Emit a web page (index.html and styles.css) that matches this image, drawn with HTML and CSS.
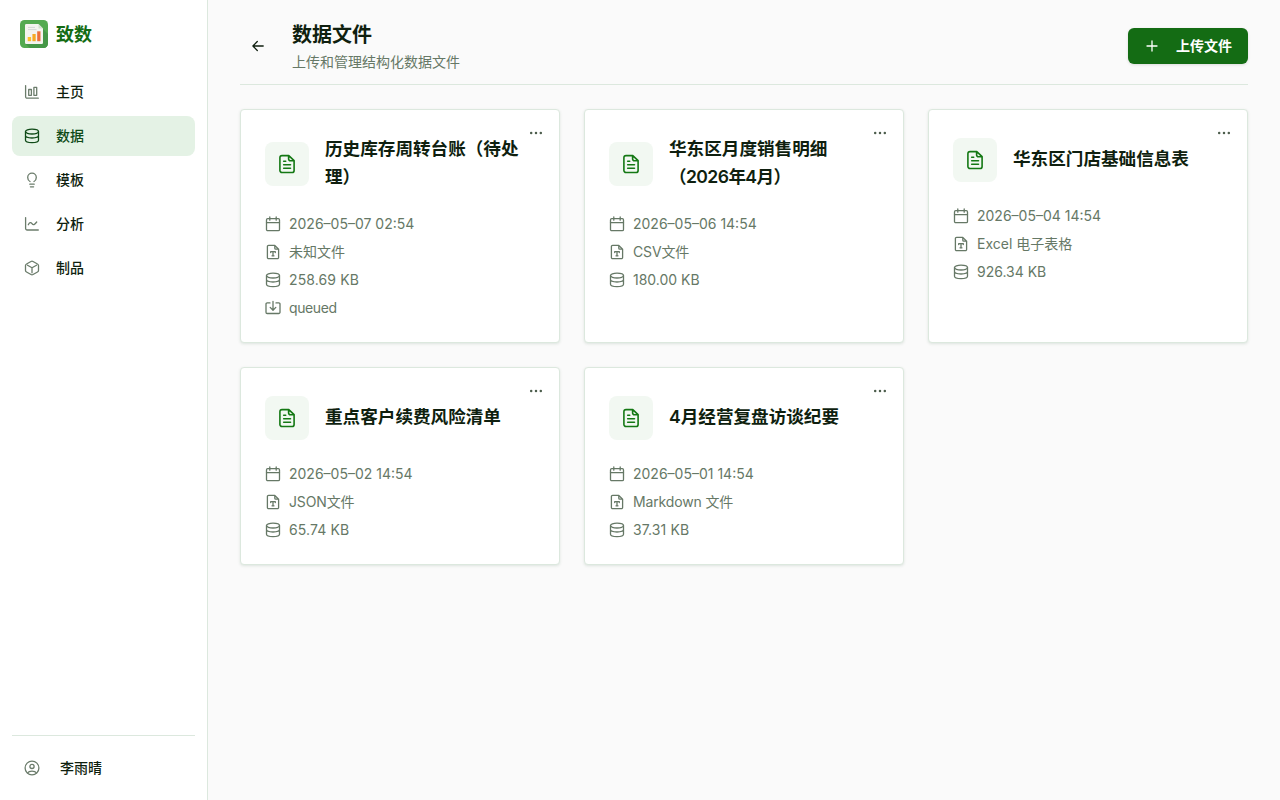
FILE: index.html
```html
<!DOCTYPE html>
<html lang="zh-CN">
<head>
<meta charset="utf-8">
<title>数据文件</title>
<link rel="stylesheet" href="styles.css">
</head>
<body>
<svg class="defs" width="0" height="0">
  <symbol id="db" viewBox="0 0 16 16"><ellipse cx="8" cy="3.6" rx="6.5" ry="2.400"/><path d="M1.500 3.600v8.600c0 1.400 2.900 2.400 6.500 2.400s6.500-1 6.500-2.400V3.600M1.500 7.600c0 1.400 2.900 2.400 6.500 2.400s6.500-1 6.500-2.400"/></symbol>
  <symbol id="cal" viewBox="0 0 16 16"><rect x="1.500" y="2.700" width="13" height="12" rx="1.200"/><path d="M1.500 6.600h13M4.800 1v3.200M11.200 1v3.200"/></symbol>
  <symbol id="type" viewBox="0 0 16 16"><path d="M9.8 1.4H3.6a1.2 1.2 0 0 0-1.2 1.2v10.9a1.2 1.2 0 0 0 1.2 1.2h8.8a1.2 1.2 0 0 0 1.2-1.2V5.2zM9.8 1.6v2.6a1 1 0 0 0 1 1h2.600M5.700 8.600V7.600h4.600v1M8 7.600v4.200M7 11.800h2"/></symbol>
  <symbol id="inbox" viewBox="0 0 16 16"><path d="M5 2.900H2.200A1.200 1.200 0 0 0 1 4.100v8.200a1.200 1.200 0 0 0 1.200 1.200h11.600a1.200 1.200 0 0 0 1.200-1.200V4.100a1.200 1.200 0 0 0-1.200-1.200H11M8 1.400V10M5.200 7.400 8 10.200l2.800-2.800"/></symbol>
  <symbol id="doc" viewBox="0 0 20 20"><path d="M11.800 1.600H5a2.100 2.100 0 0 0-2.100 2.100v12.700A2.100 2.100 0 0 0 5 18.500h10a2.100 2.100 0 0 0 2.100-2.100V6.600zM11.600 1.800v2.900a2 2 0 0 0 2 2h3.300M6.700 7.200h2M6.700 10.800h6.800M6.700 14.200h6.800"/></symbol>
  <symbol id="dots" viewBox="0 0 16 16"><circle cx="3.200" cy="8" r="1.250"/><circle cx="8" cy="8" r="1.250"/><circle cx="12.800" cy="8" r="1.250"/></symbol>
</svg>
<div class="app">
  <aside class="sidebar">
    <div class="brand">
      <svg width="28" height="28" viewBox="0 0 28 28">
        <rect width="28" height="28" rx="4.500" fill="#54aa50"/>
        <path d="m23 9 5 5v9.500a4.500 4.500 0 0 1-4.500 4.500H10l-5-4.500z" fill="#459747"/>
        <path d="M6.200 4h12.300L23 8.500V22.700a1.200 1.200 0 0 1-1.200 1.200H6.200A1.200 1.200 0 0 1 5 22.700V5.200A1.200 1.200 0 0 1 6.200 4z" fill="#f4f4ef"/>
        <path d="M18.500 4 23 8.500h-4.500z" fill="#d3dfce"/>
        <path d="M8 7.400h7M8 9.600h8.500" stroke="#d5d8d5"/>
        <path d="M7.700 17h3.400v4.200H7.700z" fill="#fbc02d"/><path d="M12.400 14h3.300v7.200h-3.300z" fill="#f6a925"/><path d="M17.200 11.300h3.300v9.900h-3.300z" fill="#ec703a"/>
      </svg>
      <span>致数</span>
    </div>
    <nav class="nav">
      <a class="nav-item"><svg class="icon" width="16" height="16" viewBox="0 0 16 16"><path d="M1.600 1.600v11.100a1.500 1.500 0 0 0 1.500 1.500h11.200M4.700 5.500h2.700v5.800H4.700zM9.900 3.400h2.800v7.900H9.900z"/></svg><span>主页</span></a>
      <a class="nav-item active"><svg class="icon" width="16" height="16"><use href="#db"/></svg><span>数据</span></a>
      <a class="nav-item"><svg class="icon" width="16" height="16" viewBox="0 0 16 16"><path d="M6 9.500C4.500 8.700 3.700 7.200 3.700 5.500a4.300 4.300 0 0 1 8.600 0c0 1.700-.8 3.200-2.300 4M5.800 12.200h4.400M6.400 14.800h3.200"/></svg><span>模板</span></a>
      <a class="nav-item"><svg class="icon" width="16" height="16" viewBox="0 0 16 16"><path d="M1.600 1.600v10.900a1.500 1.500 0 0 0 1.500 1.500h11.200M4.300 8.700C5.500 6.300 6.800 6 8 7.700s2.600 1.200 4.700-1.700"/></svg><span>分析</span></a>
      <a class="nav-item"><svg class="icon" width="16" height="16" viewBox="0 0 16 16"><path d="M7 1.500 2.500 4a1.800 1.800 0 0 0-1 1.600v4.800A1.800 1.800 0 0 0 2.500 12L7 14.500a2 2 0 0 0 2 0l4.500-2.500a1.800 1.800 0 0 0 1-1.600V5.600a1.800 1.800 0 0 0-1-1.600L9 1.500a2 2 0 0 0-2 0zM3.500 5.200 8 7.800l4.500-2.600M8 7.800v5"/></svg><span>制品</span></a>
    </nav>
    <div class="user">
      <svg class="icon" width="16" height="16" viewBox="0 0 16 16"><circle cx="8" cy="8" r="6.900"/><circle cx="8" cy="6.400" r="2.100"/><path d="M3.500 13c1-1.600 2.500-1.900 4.500-1.900s3.500.3 4.500 1.900"/></svg>
      <span>李雨晴</span>
    </div>
  </aside>
  <main class="main">
    <header class="page-head">
      <a class="back"><svg class="icon" width="16" height="16" viewBox="0 0 16 16"><path d="M13.200 8H2.900M7.300 3.500 2.900 8l4.400 4.500"/></svg></a>
      <div class="heading">
        <h1>数据文件</h1>
        <p>上传和管理结构化数据文件</p>
      </div>
      <button class="upload"><svg class="icon" width="16" height="16" viewBox="0 0 16 16"><path d="M8 3v10M3 8h10"/></svg><span>上传文件</span></button>
    </header>
    <section class="grid">
      <article class="card">
        <svg class="more" width="16" height="16"><use href="#dots"/></svg>
        <div class="card-head"><div class="tile"><svg class="icon" width="20" height="20"><use href="#doc"/></svg></div><h2>历史库存周转台账（待处理）</h2></div>
        <ul class="meta">
          <li><svg class="icon" width="16" height="16"><use href="#cal"/></svg><span>2026–05–07 02:54</span></li>
          <li><svg class="icon" width="16" height="16"><use href="#type"/></svg><span>未知文件</span></li>
          <li><svg class="icon" width="16" height="16"><use href="#db"/></svg><span class="size">258.69 KB</span></li>
          <li><svg class="icon" width="16" height="16"><use href="#inbox"/></svg><span class="state">queued</span></li>
        </ul>
      </article>
      <article class="card">
        <svg class="more" width="16" height="16"><use href="#dots"/></svg>
        <div class="card-head"><div class="tile"><svg class="icon" width="20" height="20"><use href="#doc"/></svg></div><h2>华东区月度销售明细<span class="period">（2026年4月）</span></h2></div>
        <ul class="meta">
          <li><svg class="icon" width="16" height="16"><use href="#cal"/></svg><span>2026–05–06 14:54</span></li>
          <li><svg class="icon" width="16" height="16"><use href="#type"/></svg><span class="kind">CSV文件</span></li>
          <li><svg class="icon" width="16" height="16"><use href="#db"/></svg><span>180.00 KB</span></li>
        </ul>
      </article>
      <article class="card">
        <svg class="more" width="16" height="16"><use href="#dots"/></svg>
        <div class="card-head"><div class="tile"><svg class="icon" width="20" height="20"><use href="#doc"/></svg></div><h2>华东区门店基础信息表</h2></div>
        <ul class="meta">
          <li><svg class="icon" width="16" height="16"><use href="#cal"/></svg><span>2026–05–04 14:54</span></li>
          <li><svg class="icon" width="16" height="16"><use href="#type"/></svg><span>Excel 电子表格</span></li>
          <li><svg class="icon" width="16" height="16"><use href="#db"/></svg><span>926.34 KB</span></li>
        </ul>
      </article>
      <article class="card">
        <svg class="more" width="16" height="16"><use href="#dots"/></svg>
        <div class="card-head"><div class="tile"><svg class="icon" width="20" height="20"><use href="#doc"/></svg></div><h2>重点客户续费风险清单</h2></div>
        <ul class="meta">
          <li><svg class="icon" width="16" height="16"><use href="#cal"/></svg><span>2026–05–02 14:54</span></li>
          <li><svg class="icon" width="16" height="16"><use href="#type"/></svg><span class="kind">JSON文件</span></li>
          <li><svg class="icon" width="16" height="16"><use href="#db"/></svg><span class="size">65.74 KB</span></li>
        </ul>
      </article>
      <article class="card">
        <svg class="more" width="16" height="16"><use href="#dots"/></svg>
        <div class="card-head"><div class="tile"><svg class="icon" width="20" height="20"><use href="#doc"/></svg></div><h2>4月经营复盘访谈纪要</h2></div>
        <ul class="meta">
          <li><svg class="icon" width="16" height="16"><use href="#cal"/></svg><span>2026–05–01 14:54</span></li>
          <li><svg class="icon" width="16" height="16"><use href="#type"/></svg><span class="kind">Markdown 文件</span></li>
          <li><svg class="icon" width="16" height="16"><use href="#db"/></svg><span class="size">37.31 KB</span></li>
        </ul>
      </article>
    </section>
  </main>
</div>
</body>
</html>
```
FILE: styles.css
```css
* { box-sizing: border-box; margin: 0; padding: 0; }
body { font: 14px/20px Inter, "Noto Sans CJK SC", sans-serif; color: #0f1f0f; background: #fafafa; }
.defs { position: absolute; }
.icon { flex: none; fill: none; stroke: currentColor; stroke-width: 1.3; stroke-linecap: round; stroke-linejoin: round; }
.app { display: flex; height: 800px; }
.sidebar { width: 208px; flex: none; background: #fff; border-right: 1px solid #dce8de; padding: 20px 12px 12px; display: flex; flex-direction: column; }
.brand { display: flex; align-items: center; gap: 8px; padding-left: 8px; height: 28px; font-size: 18px; font-weight: 600; color: #146c14; }
.brand span { padding-top: 2px; }
.nav { margin-top: 24px; display: flex; flex-direction: column; gap: 4px; }
.nav-item { display: flex; align-items: center; gap: 16px; height: 40px; padding: 0 12px; border-radius: 8px; font-weight: 500; }
.nav-item .icon, .user .icon { color: #6b7c6b; }
.nav-item.active { background: #e4f2e5; color: #0f4a17; }
.nav-item.active .icon { color: #0f4a17; }
.user { margin-top: auto; border-top: 1px solid #dce8de; height: 53px; padding: 12px 12px 0; display: flex; align-items: center; gap: 20px; font-weight: 500; }
.main { flex: 1; padding: 20px 32px; }
.page-head { display: flex; align-items: center; height: 65px; padding-bottom: 12px; border-bottom: 1px solid #dce8de; }
.back { width: 36px; height: 36px; display: flex; align-items: center; justify-content: center; }
.heading { margin-left: 16px; }
.heading h1 { font-size: 20px; line-height: 28px; font-weight: 600; padding-top: 1px; }
.heading p { line-height: 20px; margin-top: 3px; color: #667866; }
.upload { margin-left: auto; width: 120px; height: 36px; border: 0; border-radius: 6px; background: #146c14; color: #fff; font: inherit; font-weight: 600; display: flex; align-items: center; justify-content: center; gap: 16px; box-shadow: 0 1px 3px rgba(0,0,0,.12); }
.grid { margin-top: 24px; display: grid; grid-template-columns: repeat(3, 320px); gap: 24px; }
.card { position: relative; background: #fff; border: 1px solid #dce8de; border-radius: 4px; padding: 24px; box-shadow: 0 1px 3px rgba(20,80,40,.13); }
.more { position: absolute; right: 15px; top: 15px; fill: #4d5e4d; }
.card-head { display: flex; align-items: center; gap: 16px; margin-bottom: 20px; }
.tile { width: 44px; height: 44px; margin: 4px 0; flex: none; border-radius: 8px; background: #f2f8f2; color: #147814; display: flex; align-items: center; justify-content: center; }
.tile .icon { stroke-width: 1.6; }
.card h2 { flex: 1; font-size: 17.6px; line-height: 28px; font-weight: 600; padding: 1px 0 3px; }
.period { letter-spacing: -.6px; }
.meta { list-style: none; display: flex; flex-direction: column; gap: 8px; color: #667866; }
.meta li { display: flex; align-items: center; gap: 8px; height: 20px; }
.size { letter-spacing: .12px; }
.kind { letter-spacing: -.15px; }
.state { letter-spacing: -.4px; }
```
